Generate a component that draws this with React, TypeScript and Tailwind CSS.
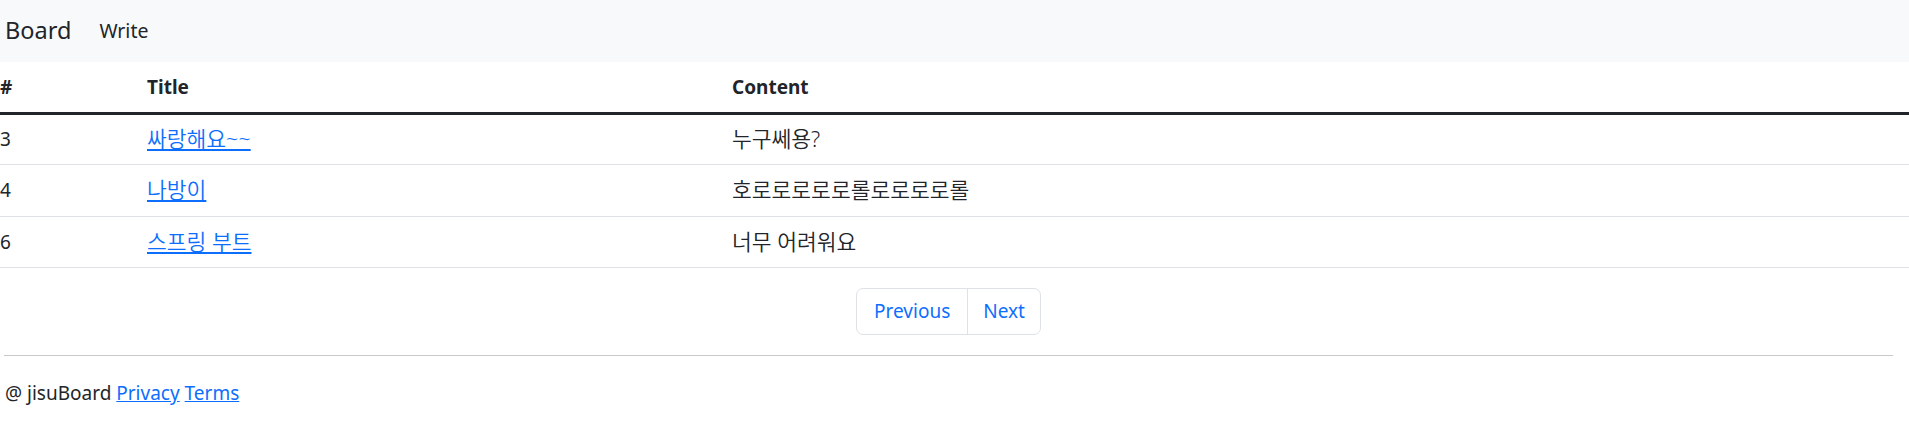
const posts = [
  { id: 3, title: '싸랑해요~~', content: '누구쎄용?' },
  { id: 4, title: '나방이', content: '호로로로로로롤로로로로롤' },
  { id: 6, title: '스프링 부트', content: '너무 어려워요' },
];

export default function App() {
  return (
    <div
      className="min-h-[448px] bg-white text-[19px] leading-[1.5] text-[#212529]"
      style={{ fontFamily: '"Noto Sans", "Noto Sans CJK KR", sans-serif' }}
    >
      {/* Navbar */}
      <nav className="flex h-[62px] items-center bg-[#f8f9fa] pl-[5px]">
        <a className="text-[23.5px] leading-none text-[#212529]">Board</a>
        <a className="ml-[28px] text-[19.5px] leading-none text-[#212529]">Write</a>
      </nav>

      {/* Post list */}
      <table className="w-full border-collapse text-left">
        <thead>
          <tr className="border-b-[3px] border-[#212529]">
            <th className="h-[51px] w-[147px] p-0 font-bold">#</th>
            <th className="h-[51px] w-[585px] p-0 font-bold">Title</th>
            <th className="h-[51px] p-0 font-bold">Content</th>
          </tr>
        </thead>
        <tbody>
          {posts.map((post) => (
            <tr key={post.id} className="border-b border-[#dee2e6]">
              <td className="h-[51.5px] p-0">{post.id}</td>
              <td className="h-[51.5px] p-0">
                <a href="#" className="text-[21.5px] font-[350] text-[#0d6efd] underline">
                  {post.title}
                </a>
              </td>
              <td className="h-[51.5px] p-0 text-[21.5px] font-[350]">{post.content}</td>
            </tr>
          ))}
        </tbody>
      </table>

      {/* Pagination */}
      <div className="mt-[20px] flex justify-center">
        <div className="mr-[12px] flex overflow-hidden rounded-[7px] border border-[#dee2e6]">
          <a href="#" className="flex h-[45px] items-center px-[17px] text-[#0d6efd]">
            Previous
          </a>
          <a href="#" className="flex h-[45px] items-center border-l border-[#dee2e6] px-[15px] text-[#0d6efd]">
            Next
          </a>
        </div>
      </div>

      <hr className="mb-[23px] ml-[4px] mr-[16px] mt-[20px] border-t border-[#c8c9ca]" />

      {/* Footer */}
      <footer className="pl-[5px]">
        @ jisuBoard{' '}
        <a href="#" className="text-[#0d6efd] underline">
          Privacy
        </a>{' '}
        <a href="#" className="text-[#0d6efd] underline">
          Terms
        </a>
      </footer>
    </div>
  );
}
